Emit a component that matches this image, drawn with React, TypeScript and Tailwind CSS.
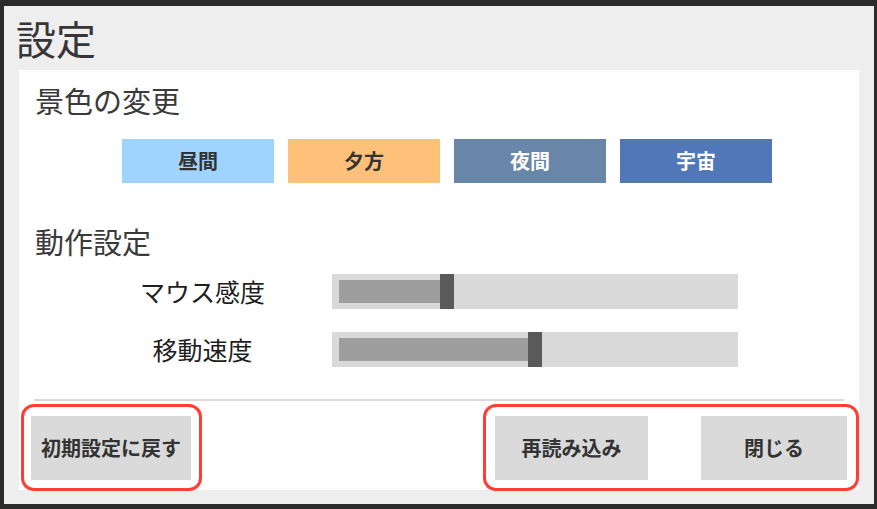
import React from "react";

const font = { fontFamily: '"Noto Sans CJK JP", "Noto Sans", sans-serif' };

function Slider({ fill, thumb }: { fill: number; thumb: number }) {
  return (
    <div className="relative ml-[57px] h-[35px] w-[406px] bg-[#d9d9d9]">
      <div
        className="absolute left-[7px] top-[6px] bottom-[6px] bg-[#9e9e9e]"
        style={{ width: fill }}
      />
      <div
        className="absolute top-0 bottom-0 w-[14px] bg-[#5a5a5a]"
        style={{ left: thumb }}
      />
    </div>
  );
}

export default function App() {
  const colors = [
    { label: "昼間", bg: "bg-[#9fd4fe]", fg: "text-[#333333]" },
    { label: "夕方", bg: "bg-[#ffc07a]", fg: "text-[#333333]" },
    { label: "夜間", bg: "bg-[#6886a8]", fg: "text-white" },
    { label: "宇宙", bg: "bg-[#5078b8]", fg: "text-white" },
  ];
  return (
    <div
      className="flex h-[509px] w-[877px] bg-[#2b2b2b] pt-[6px] pl-[4px] pr-[3px] pb-[5px]"
      style={font}
    >
      <div className="flex flex-1 flex-col bg-[#eeeeee]">
        <div className="mt-[12px] h-[40px] pl-[12px] text-[40px] leading-[40px] text-[#363636]">
          設定
        </div>
        <div className="relative mx-[15px] mt-[12px] mb-[14px] flex flex-1 flex-col bg-white pt-[16px] pb-[10px]">
          <div className="h-[29px] pl-[16px] text-[29px] leading-[29px] text-[#3a3a3a]">
            景色の変更
          </div>
          <div className="mt-[24px] flex gap-[14px] pl-[103px]">
            {colors.map((c) => (
              <div
                key={c.label}
                className={`flex h-[44px] w-[152px] items-center justify-center text-[20px] font-bold ${c.bg} ${c.fg}`}
              >
                {c.label}
              </div>
            ))}
          </div>
          <div className="mt-[44px] h-[29px] pl-[16px] text-[29px] leading-[29px] text-[#3a3a3a]">
            動作設定
          </div>
          <div className="mt-[18px] flex items-center pl-[111px]">
            <div className="w-[145px] text-center text-[25px] leading-[35px] text-[#1e1e1e]">
              マウス感度
            </div>
            <Slider fill={101} thumb={108} />
          </div>
          <div className="mt-[23px] flex items-center pl-[111px]">
            <div className="w-[145px] text-center text-[25px] leading-[35px] text-[#1e1e1e]">
              移動速度
            </div>
            <Slider fill={189} thumb={196} />
          </div>
          <div className="mx-[15px] mt-[32px] h-[2px] bg-[#d9d9d9]" />
          <div className="mt-[15px] flex h-[64px] justify-between px-[12px]">
            <div className="flex w-[160px] items-center justify-center bg-[#dadada] text-[20px] font-bold text-[#333333]">
              初期設定に戻す
            </div>
            <div className="flex gap-[53px]">
              <div className="flex w-[153px] items-center justify-center bg-[#dadada] text-[20px] font-bold text-[#333333]">
                再読み込み
              </div>
              <div className="flex w-[146px] items-center justify-center bg-[#dadada] text-[20px] font-bold text-[#333333]">
                閉じる
              </div>
            </div>
          </div>
          <div className="pointer-events-none absolute left-[2px] top-[334px] h-[87px] w-[181px] rounded-[13px] border-[3px] border-[#ff3d33]" />
          <div className="pointer-events-none absolute left-[464px] top-[334px] h-[87px] w-[376px] rounded-[13px] border-[3px] border-[#ff3d33]" />
        </div>
      </div>
    </div>
  );
}
